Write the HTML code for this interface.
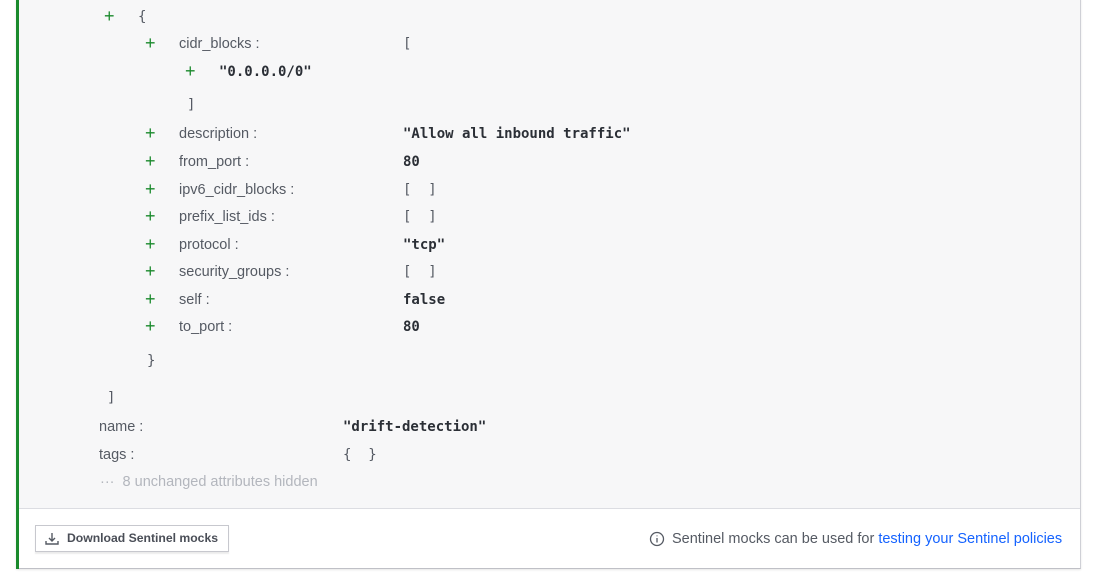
<!DOCTYPE html>
<html><head><style>
body{margin:0;width:1095px;height:580px;background:#fff;position:relative;overflow:hidden;font-family:"Liberation Sans",sans-serif;}
.card{position:absolute;left:16px;top:-2px;width:1064px;height:570px;border-right:1px solid #cfd0d6;border-bottom:1px solid #bfc0c6;box-shadow:0 1px 2px rgba(0,0,0,.1);}
.green{position:absolute;left:16px;top:0;width:3px;height:569px;background:#1a8a2c;}
.body{position:absolute;left:19px;top:0;width:1061px;height:508px;background:#f7f7f8;border-bottom:1px solid #dcdde2;}
.t{position:absolute;font-size:14.5px;color:#555a63;line-height:18px;white-space:pre;transform:translateY(-8px);}
.p{color:#1a8a2c;font-size:18px;margin-top:-1px;}
.m{font-family:"DejaVu Sans Mono",monospace;font-weight:bold;font-size:14px;color:#2b2f36;}
.b{font-family:"DejaVu Sans Mono",monospace;font-size:14px;color:#555a63;}
.btn{position:absolute;left:35px;top:525px;width:192px;height:25px;border:1px solid #c7c8ce;background:#fff;box-shadow:0 2px 1px rgba(0,0,0,.08);font-size:12px;font-weight:bold;color:#4a4e57;}
</style></head><body>
<div class="card"></div>
<div class="body"></div>
<div class="green"></div>

<div class="t p" style="left:104px;top:16px">+</div><div class="t b" style="left:138px;top:16px">{</div>
<div class="t p" style="left:145px;top:43px">+</div><div class="t" style="left:179px;top:43px">cidr_blocks :</div><div class="t b" style="left:403px;top:43px">[</div>
<div class="t p" style="left:185px;top:71px">+</div><div class="t m" style="left:219px;top:71px">"0.0.0.0/0"</div>
<div class="t b" style="left:187px;top:104px">]</div>
<div class="t p" style="left:145px;top:133px">+</div><div class="t" style="left:179px;top:133px">description :</div><div class="t m" style="left:403px;top:133px">"Allow all inbound traffic"</div>
<div class="t p" style="left:145px;top:161px">+</div><div class="t" style="left:179px;top:161px">from_port :</div><div class="t m" style="left:403px;top:161px">80</div>
<div class="t p" style="left:145px;top:189px">+</div><div class="t" style="left:179px;top:189px">ipv6_cidr_blocks :</div><div class="t b" style="left:403px;top:189px">[  ]</div>
<div class="t p" style="left:145px;top:216px">+</div><div class="t" style="left:179px;top:216px">prefix_list_ids :</div><div class="t b" style="left:403px;top:216px">[  ]</div>
<div class="t p" style="left:145px;top:244px">+</div><div class="t" style="left:179px;top:244px">protocol :</div><div class="t m" style="left:403px;top:244px">"tcp"</div>
<div class="t p" style="left:145px;top:271px">+</div><div class="t" style="left:179px;top:271px">security_groups :</div><div class="t b" style="left:403px;top:271px">[  ]</div>
<div class="t p" style="left:145px;top:299px">+</div><div class="t" style="left:179px;top:299px">self :</div><div class="t m" style="left:403px;top:299px">false</div>
<div class="t p" style="left:145px;top:326px">+</div><div class="t" style="left:179px;top:326px">to_port :</div><div class="t m" style="left:403px;top:326px">80</div>
<div class="t b" style="left:147px;top:360px">}</div>
<div class="t b" style="left:107px;top:397px">]</div>
<div class="t" style="left:99px;top:426px">name :</div><div class="t m" style="left:343px;top:426px">"drift-detection"</div>
<div class="t" style="left:99px;top:454px">tags :</div><div class="t b" style="left:343px;top:454px">{  }</div>
<div class="t" style="left:100px;top:481px;color:#b3b6bd">···  8 unchanged attributes hidden</div>

<div class="btn">
<svg style="position:absolute;left:8px;top:5px" width="16" height="16" viewBox="0 0 16 16" fill="none" stroke="#555a63" stroke-width="1.4"><path d="M8 2v8M5 7l3 3 3-3M2 10v3h12v-3"/></svg>
<span style="position:absolute;left:31px;top:5px;font-size:12.2px">Download Sentinel mocks</span></div>

<svg style="position:absolute;left:649px;top:531px" width="16" height="16" viewBox="0 0 16 16" fill="none" stroke="#555a63" stroke-width="1.3"><circle cx="8" cy="8" r="6.5"/><path d="M8 7v4.5M8 4.5v.8"/></svg>
<div class="t" style="left:672px;top:538px">Sentinel mocks can be used for <span style="color:#1563ff">testing your Sentinel policies</span></div>
</body></html>
